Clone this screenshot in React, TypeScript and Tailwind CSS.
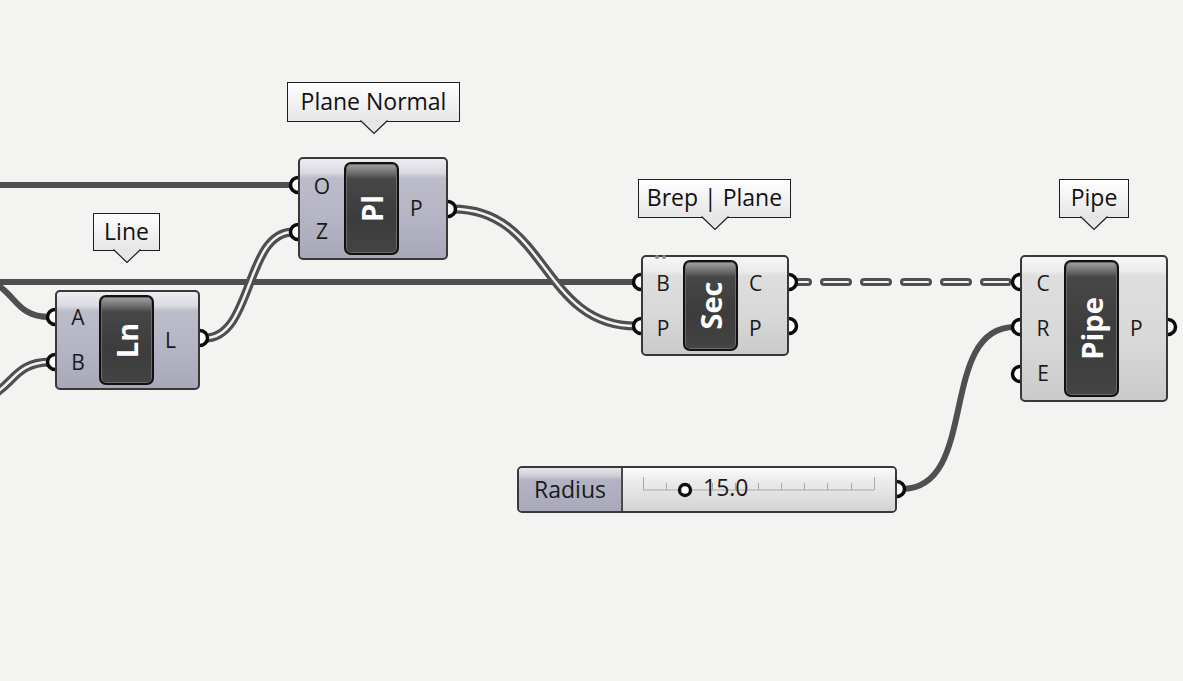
import React from 'react';

const WIRE = '#4f4f4f';
const CANVAS = '#f3f3f1';

const font = "font-['Segoe_UI','Open_Sans','Noto_Sans',sans-serif]";

const blueBody =
  'bg-[linear-gradient(to_bottom,#ececf1_0px,#dadae2_14px,#bcbcca_19px,#b4b4c4_60%,#a8a8b9_100%)]';
const grayBody =
  'bg-[linear-gradient(to_bottom,#f6f6f6_0px,#ececec_14px,#dedede_19px,#d8d8d8_60%,#cacaca_100%)]';
const darkBox =
  'bg-[linear-gradient(to_bottom,#a3a3a3_0px,#6e6e6e_9px,#474747_15px,#3c3c3c_60%,#444444_100%)]';

interface TipProps {
  className: string;
  text: string;
}

const Tip: React.FC<TipProps> = ({ className, text }) => (
  <div
    className={`absolute ${className} flex items-center justify-center border border-[#1e1e1e] bg-[linear-gradient(to_bottom,#ffffff,#e6e6e6)] text-[23px] leading-none text-[#111] ${font}`}
  >
    <span className="-mt-[2px]">{text}</span>
    <svg
      className="absolute left-1/2 top-full -ml-[14px] -mt-[1px]"
      width="28"
      height="15"
      viewBox="0 0 28 15"
    >
      <polygon points="0,0 14,13.5 28,0" fill="#e6e6e6" />
      <polyline points="0.5,0.5 14,13.5 27.5,0.5" fill="none" stroke="#1e1e1e" strokeWidth="1.2" />
    </svg>
  </div>
);

interface NodeProps {
  className: string;
  tone: 'blue' | 'gray';
  inputs: string[];
  outputs: string[];
  label: string;
  leftW: string;
}

const Node: React.FC<NodeProps> = ({ className, tone, inputs, outputs, label, leftW }) => (
  <div
    className={`absolute ${className} flex rounded-[5px] border-2 border-[#383838] ${tone === 'blue' ? blueBody : grayBody} ${font} text-[#1a1a1a]`}
  >
    <div className={`flex ${leftW} flex-col justify-center`}>
      {inputs.map(i => (
        <div key={i} className="flex h-[45px] items-center justify-center text-[21px] leading-none">
          {i}
        </div>
      ))}
    </div>
    <div
      className={`my-[3px] flex w-[55px] items-center justify-center overflow-visible rounded-[7px] border-2 border-[#111] ${darkBox} shadow-[inset_0_0_0_1px_#6a6a6a]`}
    >
      <span className="inline-block -rotate-90 whitespace-nowrap text-[29px] font-bold leading-none text-white">
        {label}
      </span>
    </div>
    <div className="flex flex-1 flex-col justify-center pl-[11px]">
      {outputs.map(o => (
        <div key={o} className="flex h-[45px] items-center text-[21px] leading-none">
          {o}
        </div>
      ))}
    </div>
  </div>
);

// grips: [x, y, side]
const grips: [number, number, 'in' | 'out'][] = [
  [298, 185, 'in'],
  [298, 232, 'in'],
  [448, 209, 'out'],
  [55, 317, 'in'],
  [55, 362, 'in'],
  [200, 338, 'out'],
  [641, 282, 'in'],
  [641, 326, 'in'],
  [789, 282, 'out'],
  [789, 326, 'out'],
  [1020, 282, 'in'],
  [1020, 327, 'in'],
  [1020, 374, 'in'],
  [1168, 327, 'out'],
  [897, 489, 'out'],
];

const ticks = [643, 666, 689, 712, 735, 758, 781, 804, 827, 851, 874];

const Slider: React.FC = () => (
  <div
    className={`absolute left-[517px] top-[466px] flex h-[47px] w-[380px] overflow-hidden rounded-[5px] border-2 border-[#383838] ${font}`}
  >
    <div className="flex w-[104px] items-center justify-center border-r-2 border-[#4a4a4a] bg-[linear-gradient(to_bottom,#e4e4ea_0px,#cfcfd9_8px,#b3b3c3_12px,#a9a9bb_100%)] text-[23px] leading-none text-[#1a1a1a]">
      <span className="-mt-[1px]">Radius</span>
    </div>
    <div className="relative flex-1 bg-[linear-gradient(to_bottom,#fbfbfb_0px,#eeeeee_10px,#e2e2e2_60%,#d2d2d2_100%)]">
      <svg className="absolute left-0 top-0" width="272" height="43">
        <line x1={643 - 623} y1="22" x2={874 - 623} y2="22" stroke="#a8a8a8" strokeWidth="1" />
        {ticks.map((t, i) => (
          <line
            key={t}
            x1={t - 623 + 0.5}
            x2={t - 623 + 0.5}
            y1={i === 0 || i === ticks.length - 1 ? 9 : 15}
            y2="22"
            stroke="#a8a8a8"
            strokeWidth="1"
          />
        ))}
        <circle cx={685 - 623} cy="22" r="5.5" fill="#ffffff" stroke="#111" strokeWidth="3.4" />
      </svg>
      <span className="absolute left-[80px] top-[8px] text-[23px] leading-none text-[#1a1a1a]">15.0</span>
    </div>
  </div>
);

const curve = (x1: number, y1: number, x2: number, y2: number, d: number) =>
  `M ${x1} ${y1} C ${x1 + d} ${y1}, ${x2 - d} ${y2}, ${x2} ${y2}`;

const App: React.FC = () => {
  const doubles = [
    curve(205, 338, 293, 232, 48),
    curve(453, 209, 636, 326, 95),
    'M -40 402 C 15 402, 5 362, 50 362',
  ];

  return (
    <div className="relative h-[681px] w-[1183px] overflow-hidden bg-[#f3f3f1]">
      {/* wires */}
      <svg className="absolute left-0 top-0" width="1183" height="681">
        <line x1="0" y1="185" x2="293" y2="185" stroke={WIRE} strokeWidth="6" />
        <line x1="0" y1="282" x2="636" y2="282" stroke={WIRE} strokeWidth="6" />
        <path d="M -40 276 C 20 276, 5 317, 50 317" fill="none" stroke={WIRE} strokeWidth="6" />
        <path d={curve(902, 489, 1015, 327, 78)} fill="none" stroke={WIRE} strokeWidth="6" />
        {doubles.map(d => (
          <g key={d}>
            <path d={d} fill="none" stroke={WIRE} strokeWidth="9" />
            <path d={d} fill="none" stroke={CANVAS} strokeWidth="2.5" />
          </g>
        ))}
        <line
          x1="794"
          y1="282"
          x2="1015"
          y2="282"
          stroke={WIRE}
          strokeWidth="8"
          strokeLinecap="round"
          strokeDasharray="24 16"
          strokeDashoffset="10"
        />
        <line
          x1="794"
          y1="282"
          x2="1015"
          y2="282"
          stroke={CANVAS}
          strokeWidth="2"
          strokeLinecap="round"
          strokeDasharray="24 16"
          strokeDashoffset="10"
        />
      </svg>

      <Tip className="left-[287px] top-[82px] h-[40px] w-[173px]" text="Plane Normal" />
      <Tip className="left-[93px] top-[213px] h-[38px] w-[67px]" text="Line" />
      <Tip className="left-[638px] top-[179px] h-[39px] w-[153px]" text="Brep | Plane" />
      <Tip className="left-[1059px] top-[179px] h-[39px] w-[70px]" text="Pipe" />

      <Node
        className="left-[298px] top-[157px] h-[103px] w-[150px]"
        tone="blue"
        inputs={['O', 'Z']}
        outputs={['P']}
        label="Pl"
        leftW="w-[44px]"
      />
      <Node
        className="left-[55px] top-[290px] h-[100px] w-[145px]"
        tone="blue"
        inputs={['A', 'B']}
        outputs={['L']}
        label="Ln"
        leftW="w-[42px]"
      />
      <Node
        className="left-[641px] top-[255px] h-[101px] w-[148px]"
        tone="gray"
        inputs={['B', 'P']}
        outputs={['C', 'P']}
        label="Sec"
        leftW="w-[40px]"
      />
      <Node
        className="left-[1020px] top-[255px] h-[147px] w-[148px]"
        tone="gray"
        inputs={['C', 'R', 'E']}
        outputs={['P']}
        label="Pipe"
        leftW="w-[42px]"
      />

      <Slider />

      {/* grips and small marks */}
      <svg className="pointer-events-none absolute left-0 top-0" width="1183" height="681">
        <circle cx="657" cy="257" r="2" fill="#8a8a8a" />
        <circle cx="664" cy="257" r="2" fill="#8a8a8a" />
        {grips.map(([x, y, side]) => (
          <path
            key={`${x}-${y}`}
            d={
              side === 'in'
                ? `M ${x} ${y - 7.5} A 7.5 7.5 0 0 0 ${x} ${y + 7.5}`
                : `M ${x} ${y - 7.5} A 7.5 7.5 0 0 1 ${x} ${y + 7.5}`
            }
            fill="#ffffff"
            stroke="#0a0a0a"
            strokeWidth="3.5"
          />
        ))}
      </svg>
    </div>
  );
};

export default App;
